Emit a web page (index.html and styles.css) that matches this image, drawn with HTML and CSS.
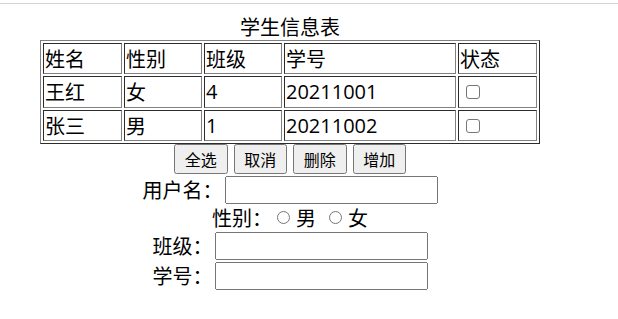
FILE: index.html
```html
<!DOCTYPE html>
<html lang="zh-CN">
<head>
<meta charset="utf-8">
<title>学生信息表</title>
<link rel="stylesheet" href="styles.css">
</head>
<body>
<div class="topline"></div>
<div class="page">
  <table class="info">
    <caption>学生信息表</caption>
    <tr>
      <td class="c1">姓名</td><td class="c2">性别</td><td class="c3">班级</td><td class="c4">学号</td><td class="c5">状态</td>
    </tr>
    <tr>
      <td>王红</td><td>女</td><td class="num">4</td><td class="num">20211001</td><td><input class="chk" type="checkbox"></td>
    </tr>
    <tr>
      <td>张三</td><td>男</td><td class="num">1</td><td class="num">20211002</td><td><input class="chk" type="checkbox"></td>
    </tr>
  </table>
  <div class="actions">
    <button class="btn">全选</button>
    <button class="btn">取消</button>
    <button class="btn">删除</button>
    <button class="btn">增加</button>
  </div>
  <div class="form">
    <div class="row"><span class="lbl">用户名：</span><input class="txt" type="text"></div>
    <div class="row"><span class="lbl">性别：</span><label class="opt"><input class="radio" type="radio" name="sex">男</label><label class="opt"><input class="radio" type="radio" name="sex">女</label></div>
    <div class="row"><span class="lbl">班级：</span><input class="txt" type="text"></div>
    <div class="row last"><span class="lbl">学号：</span><input class="txt" type="text"></div>
  </div>
</div>
</body>
</html>
```
FILE: styles.css
```css
html, body {
  margin: 0;
  padding: 0;
  background: #fff;
}
body {
  font-family: "Microsoft YaHei", "Noto Sans CJK SC", sans-serif;
  font-size: 20px;
  color: #000;
}
.topline {
  height: 3px;
  border-bottom: 1px solid #d3d3d3;
}
.page {
  width: 564px;
  margin: 10px 0 0 8px;
}
.info {
  margin: 0 auto;
  border: 1px outset gray;
  border-spacing: 2px;
  table-layout: fixed;
  width: 500px;
}
.info caption {
  line-height: 26px;
  font-size: 20px;
}
.info td {
  border: 1px inset gray;
  padding: 1px;
  line-height: 27.33px;
  text-align: left;
  white-space: nowrap;
}
.info td.num {
  font-family: "Open Sans", "Noto Sans CJK SC", sans-serif;
}
.c1, .c5 { width: 75px; }
.c2, .c3 { width: 74px; }
.c4 { width: 168px; }
.chk {
  -webkit-appearance: none;
  appearance: none;
  box-sizing: border-box;
  width: 14px;
  height: 14px;
  margin: 7px 0 0 6px;
  border: 1px solid #767676;
  border-radius: 3px;
  background: #fff;
  vertical-align: top;
}
.actions {
  display: flex;
  justify-content: center;
  gap: 6px;
  height: 30px;
}
.btn {
  width: 53.5px;
  height: 30px;
  padding: 0;
  font-family: "Microsoft YaHei", "Noto Sans CJK SC", sans-serif;
  font-size: 16px;
  line-height: 20px;
  color: #000;
}
.form {
  margin-top: 2px;
}
.row {
  display: flex;
  justify-content: center;
  align-items: center;
  height: 28px;
  line-height: 28px;
}
.row.last {
  margin-top: 2px;
}
.lbl {
  white-space: nowrap;
}
.txt {
  box-sizing: border-box;
  width: 213px;
  height: 28px;
  margin: 0 0 0 2px;
}
.opt {
  display: flex;
  align-items: center;
}
.opt + .opt {
  margin-left: 8px;
}
.radio {
  -webkit-appearance: none;
  appearance: none;
  box-sizing: border-box;
  width: 13px;
  height: 13px;
  margin: 0 6px 0 5px;
  border: 1px solid #767676;
  border-radius: 50%;
  background: #fff;
}
```
